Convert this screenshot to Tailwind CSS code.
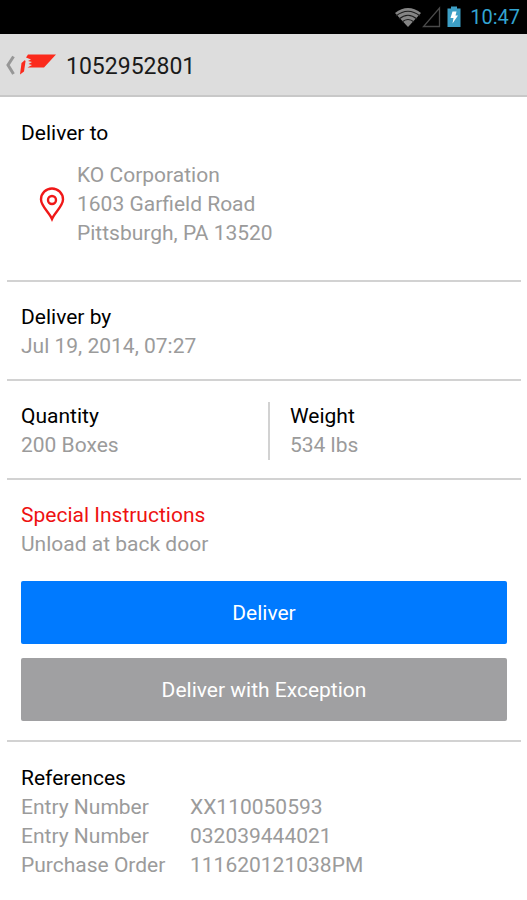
<!DOCTYPE html>
<html lang="en">

<head>
    <meta charset="UTF-8">
    <meta name="viewport" content="width=device-width, initial-scale=1.0">
    <title>Delivery 1052952801</title>
    <!-- Tailwind CSS CDN -->
    <script src="https://cdn.jsdelivr.net/npm/@tailwindcss/browser@4"></script>
</head>

<body class="bg-white min-h-screen font-[Roboto,sans-serif] text-[21px] leading-[29px] text-[#9b9b9b]">

    <!-- Status bar -->
    <div class="bg-black h-[34px] flex items-center justify-end pr-[7px]">
        <svg class="w-7 h-6" viewBox="0 0 28 24" fill="none">
            <path d="M1 8 Q14 -2 27 8 L14 22 Z" fill="#858585" />
            <path d="M2 11 Q14 1.500 26 11 M5 14 Q14 6.500 23 14 M8 17 Q14 12 20 17" stroke="#1c1c1c" stroke-width="1.200" />
        </svg>
        <svg class="w-5 h-6" viewBox="0 0 20 24" fill="none">
            <path d="M17.500 3 V21.500 H1.500 Z" stroke="#4a4a4a" stroke-width="1.300" />
        </svg>
        <svg class="w-4 h-6 ml-1 mr-2" viewBox="0 0 16 24">
            <path d="M5 1.500 H11 V3.500 H14.500 V22 H1.500 V3.500 H5 Z" fill="#3d9fc6" />
            <path d="M6.500 6.500 H10.500 L9.500 10.500 H12 L6.500 18.500 L7.500 13 H4.500 Z" fill="#fff" />
        </svg>
        <span class="text-[20px] text-[#33a5d2]">10:47</span>
    </div>

    <!-- Title bar -->
    <header class="bg-[#dddddd] h-[63px] border-b-2 border-[#c8c8c8] flex items-center pl-1 pt-[3px]">
        <a href="#" class="flex items-center" aria-label="Back">
            <svg class="w-3 h-6" viewBox="0 0 12 24" fill="none">
                <path d="M9.500 2.500 L4 11 L9.500 20" stroke="#979797" stroke-width="3" />
            </svg>
            <svg class="w-10 h-6 ml-1" viewBox="0 0 40 24" fill="#fb2a1c">
                <path d="M8 .500 H36 L24 13.500 H7.500 L12 11 L8.500 10 L12 8 L8 7 L11 5.500 L6 3.500 Z" />
                <path d="M5 6 L1.500 9 L0 20.500 L4 17.500 L5.500 7.500 Z" />
            </svg>
        </a>
        <h1 class="text-[23px] text-[#1a1a1a] ml-[6px]">1052952801</h1>
    </header>

    <main class="pl-[7px] pr-[6px]">
        <section class="px-[14px] pt-[22px] pb-8 border-b-2 border-[#d2d2d2]">
            <h2 class="text-black">Deliver to</h2>
            <div class="flex items-center mt-[13px] pl-[18px]">
                <svg class="w-[26px] h-9" viewBox="0 0 26 36" fill="none" stroke="#f01818" stroke-width="2.400">
                    <path d="M13 32 C10.500 26 2 19 2 12.500 A11 11 0 0 1 24 12.500 C24 19 15.500 26 13 32 Z" />
                    <circle cx="13" cy="13" r="4" />
                </svg>
                <address class="not-italic ml-3">
                    KO Corporation<br>
                    1603 Garfield Road<br>
                    Pittsburgh, PA 13520
                </address>
            </div>
        </section>

        <section class="px-[14px] pt-[21px] pb-[18px] border-b-2 border-[#d2d2d2]">
            <h2 class="text-black">Deliver by</h2>
            <p>Jul 19, 2014, 07:27</p>
        </section>

        <section class="pt-[21px] pb-[18px] border-b-2 border-[#d2d2d2] grid grid-cols-2">
            <div class="pl-[14px]">
                <h2 class="text-black">Quantity</h2>
                <p>200 Boxes</p>
            </div>
            <div class="ml-1 border-l-2 border-[#d2d2d2] pl-5">
                <h2 class="text-black">Weight</h2>
                <p>534 lbs</p>
            </div>
        </section>

        <section class="px-[14px] pt-[21px] pb-[19px] border-b-2 border-[#d2d2d2]">
            <h2 class="text-[#ee1111]">Special Instructions</h2>
            <p>Unload at back door</p>
            <div class="flex flex-col gap-[14px] mt-[22px] text-white">
                <button type="button" class="h-[63px] pt-[2px] rounded-xs bg-[#007aff]">Deliver</button>
                <button type="button" class="h-[63px] pt-[2px] rounded-xs bg-[#a0a0a2]">Deliver with Exception</button>
            </div>
        </section>

        <section class="px-[14px] pt-[22px]">
            <h2 class="text-black">References</h2>
            <table class="text-left">
                <tr>
                    <th scope="row" class="w-[169px] p-0 font-normal">Entry Number</th>
                    <td class="p-0">XX110050593</td>
                </tr>
                <tr>
                    <th scope="row" class="p-0 font-normal">Entry Number</th>
                    <td class="p-0">032039444021</td>
                </tr>
                <tr>
                    <th scope="row" class="p-0 font-normal">Purchase Order</th>
                    <td class="p-0">111620121038PM</td>
                </tr>
            </table>
        </section>
    </main>

</body>

</html>
